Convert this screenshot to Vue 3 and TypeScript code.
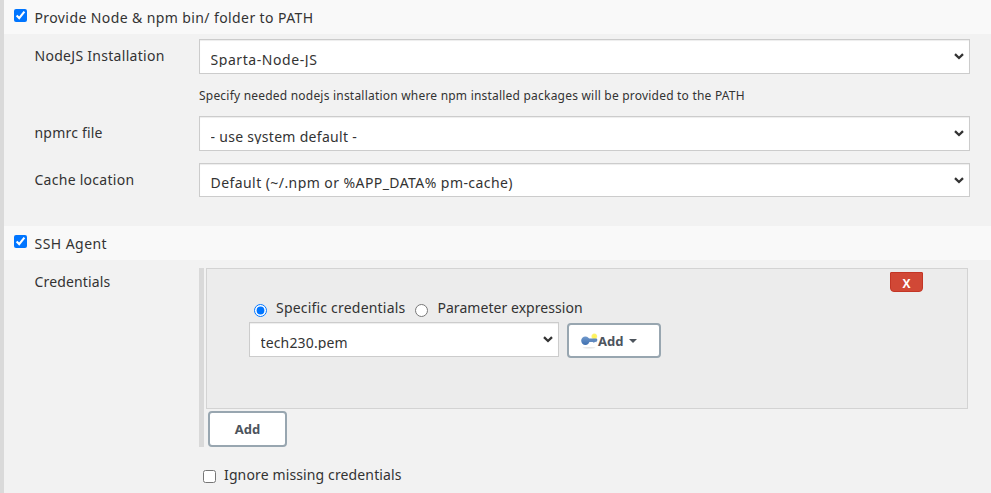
<script setup lang="ts">
import { ref } from 'vue'

const provideNode = ref(true)
const sshAgent = ref(true)
const ignoreMissing = ref(false)
const mode = ref<'specific' | 'parameter'>('specific')
const installation = ref('Sparta-Node-JS')
const npmrc = ref('- use system default -')
const cache = ref('Default (~/.npm or %APP_DATA% pm-cache)')
const credential = ref('tech230.pem')
</script>

<template>
  <main class="config">
    <label class="band">
      <input v-model="provideNode" type="checkbox" class="check" />
      <span class="t-provide">Provide Node &amp; npm bin/ folder to PATH</span>
    </label>
    <section class="fields">
      <div class="row row-install">
        <span class="name t-install">NodeJS Installation</span>
        <div class="setting">
          <select v-model="installation" class="select t-sparta"><option>Sparta-Node-JS</option></select>
          <p class="help">Specify needed nodejs installation where npm installed packages will be provided to the PATH</p>
        </div>
      </div>
      <div class="row row-npmrc">
        <span class="name t-npmrc">npmrc file</span>
        <select v-model="npmrc" class="select t-system"><option>- use system default -</option></select>
      </div>
      <div class="row">
        <span class="name t-cache">Cache location</span>
        <select v-model="cache" class="select short t-default"><option>Default (~/.npm or %APP_DATA% pm-cache)</option></select>
      </div>
    </section>

    <label class="band">
      <input v-model="sshAgent" type="checkbox" class="check" />
      <span class="t-ssh">SSH Agent</span>
    </label>
    <section class="row credentials">
      <span class="name t-cred">Credentials</span>
      <div class="setting">
        <div class="repeat">
          <div class="panel">
            <button class="remove" type="button">X</button>
            <div class="modes">
              <label class="mode">
                <input v-model="mode" type="radio" value="specific" class="radio" />
                <span class="t-specific">Specific credentials</span>
              </label>
              <label class="mode">
                <input v-model="mode" type="radio" value="parameter" class="radio" />
                <span class="t-param">Parameter expression</span>
              </label>
            </div>
            <div class="picker">
              <select v-model="credential" class="select t-tech"><option>tech230.pem</option></select>
              <button class="button add-menu" type="button">
                <svg class="key" width="17" height="16" viewBox="0 0 17 16">
                  <defs>
                    <linearGradient id="keyFill" x1="0" y1="0" x2="0" y2="1">
                      <stop offset="0" stop-color="#7099cc" />
                      <stop offset="1" stop-color="#3f70b0" />
                    </linearGradient>
                    <radialGradient id="glow">
                      <stop offset="0" stop-color="#fff250" />
                      <stop offset="0.65" stop-color="#fff36a" />
                      <stop offset="1" stop-color="#fff79a" stop-opacity="0" />
                    </radialGradient>
                  </defs>
                  <ellipse cx="8" cy="14.8" rx="6.5" ry="0.7" fill="#e4e4e4" />
                  <circle cx="13.3" cy="3.4" r="3.5" fill="url(#glow)" />
                  <path d="M7 5.6h8.7l.8 1.5-1.3 2.2-1-.5-1.3.9-1.2-.6H7z" fill="#6089bf" />
                  <ellipse cx="4.4" cy="7.7" rx="4.2" ry="4.2" fill="url(#keyFill)" />
                </svg>
                <span>Add</span>
                <svg class="caret" width="8" height="4" viewBox="0 0 8 4"><path d="M0 0h8L4 4z" fill="#4d545d" /></svg>
              </button>
            </div>
          </div>
          <button class="button add" type="button">Add</button>
        </div>
        <label class="ignore">
          <input v-model="ignoreMissing" type="checkbox" class="check" />
          <span class="t-ignore">Ignore missing credentials</span>
        </label>
      </div>
    </section>
  </main>
</template>

<style>
body {
  overflow: hidden;
  background: #f2f2f2;
}
</style>

<style scoped>
.config {
  box-sizing: border-box;
  height: 493px;
  overflow: hidden;
  border-left: 4px solid #dadada;
  background: #f2f2f2;
  color: #333;
  font-family: "Noto Sans", "Open Sans", sans-serif;
  font-size: 14px;
  line-height: 20px;
  white-space: nowrap;
}
.band {
  box-sizing: border-box;
  display: flex;
  align-items: flex-start;
  gap: 7.5px;
  height: 34px;
  padding: 8px 0 0 10px;
  background: #f9f9f9;
}
.check,
.radio {
  flex: none;
  width: 13px;
  height: 13px;
  margin: 0;
}
.band .check {
  margin-top: 1px;
}
.fields {
  box-sizing: border-box;
  height: 192px;
  padding-top: 5px;
}
.row {
  display: flex;
  align-items: flex-start;
}
.name {
  flex: none;
  box-sizing: border-box;
  width: 195px;
  padding: 7px 0 0 30.5px;
}
.row-install {
  height: 77px;
}
.row-npmrc {
  height: 47px;
}
.select {
  appearance: none;
  box-sizing: border-box;
  display: block;
  width: 771px;
  height: 35px;
  margin: 0;
  padding: 10px 20px 6px 10.5px;
  border: 1px solid #ccc;
  border-radius: 0;
  background: #fff url("data:image/svg+xml,%3Csvg xmlns='http://www.w3.org/2000/svg' width='10' height='7'%3E%3Cpath d='M1 1.2L5 5L9 1.2' fill='none' stroke='%23333' stroke-width='2.3'/%3E%3C/svg%3E") no-repeat right 5px top 13px;
  box-shadow: inset 0 1px 1px rgba(0, 0, 0, 0.075);
  color: #333;
  font-family: inherit;
  font-size: 14px;
}
.select.short {
  height: 34px;
  padding-top: 9px;
  padding-bottom: 5px;
}
.help {
  margin: 12px 0 0;
  font-size: 12px;
  line-height: 20px;
  letter-spacing: 0.21px;
}
.credentials {
  padding-top: 8px;
}
.credentials > .name {
  padding-top: 4px;
}
.repeat {
  box-sizing: border-box;
  width: 769px;
  height: 179px;
  padding-left: 2px;
  border-left: 5px solid #d9d9d9;
}
.panel {
  box-sizing: border-box;
  display: flex;
  flex-direction: column;
  height: 141px;
  padding: 3px 44px 0 42px;
  border: 1px solid #d3d3d3;
  background: #ececec;
}
.remove {
  align-self: flex-end;
  box-sizing: border-box;
  width: 33px;
  height: 20px;
  padding: 3px 0 0;
  border: 1px solid #c33626;
  border-radius: 1px 1px 4px 4px;
  background: #d14836;
  color: #fff;
  font: bold 12px/16px "Open Sans", sans-serif;
}
.modes {
  display: flex;
  gap: 10px;
  height: 30px;
  padding: 6px 0 0 5px;
  box-sizing: border-box;
}
.mode {
  display: flex;
  gap: 9px;
}
.mode .radio {
  margin-top: 6px;
}
.picker {
  display: flex;
  align-items: flex-start;
  gap: 8px;
}
.picker .select {
  width: 310px;
}
.button {
  box-sizing: border-box;
  display: flex;
  align-items: center;
  justify-content: center;
  height: 36px;
  padding: 0;
  border: 2px solid #98a6b0;
  border-radius: 4px;
  background: #fff;
  color: #4d545d;
  font: bold 13px/20px "Noto Sans", sans-serif;
}
.add-menu {
  justify-content: flex-start;
  width: 94px;
  height: 35px;
  margin-top: 1px;
  padding-left: 12px;
}
.caret {
  margin: 0 0 0 6px;
}
.add {
  width: 79px;
  margin: 2px 0 0 2px;
}
.ignore {
  display: flex;
  gap: 8px;
  padding: 18px 0 0 4px;
}
.ignore .check {
  margin-top: 5px;
}
.t-provide { letter-spacing: 0.4px; }
.t-install { letter-spacing: 0.29px; }
.t-npmrc { letter-spacing: 0.2px; }
.t-cache { letter-spacing: 0.27px; }
.t-ssh { letter-spacing: 0.45px; }
.t-cred { letter-spacing: 0.14px; }
.t-specific { letter-spacing: 0.2px; }
.t-param { letter-spacing: 0.05px; }
.t-ignore { letter-spacing: 0.13px; }
.t-sparta { letter-spacing: 0.57px; }
.t-system { letter-spacing: 0.3px; }
.t-default { letter-spacing: 0.43px; }
.t-tech { letter-spacing: 0.15px; }
</style>
